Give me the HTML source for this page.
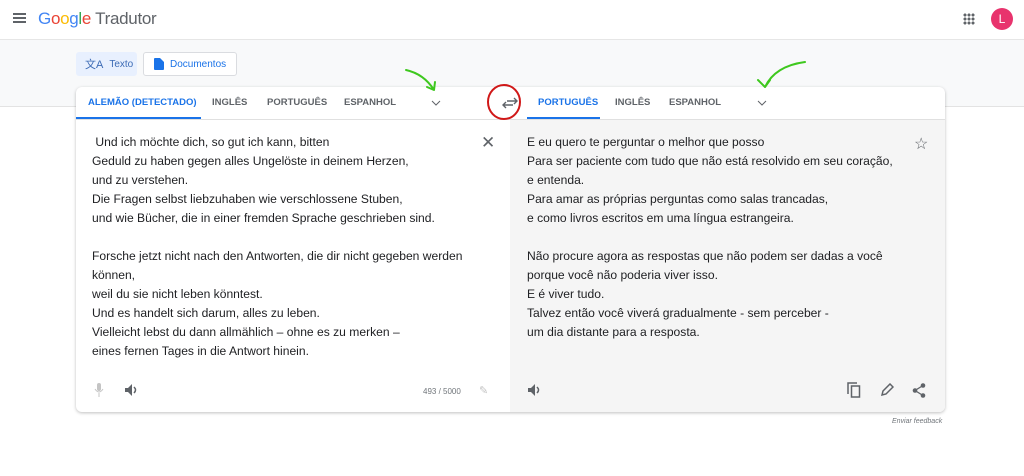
<!DOCTYPE html>
<html><head><meta charset="utf-8"><style>
*{margin:0;padding:0;box-sizing:border-box}
body{width:1024px;height:476px;overflow:hidden;background:#fff;font-family:"Liberation Sans",Arial,sans-serif;position:relative;color:#3c4043}
.hdr{position:absolute;left:0;top:0;width:1024px;height:40px;background:#fff;border-bottom:1px solid #e6e6e6}
.band{position:absolute;left:0;top:40px;width:1024px;height:67px;background:#f8f9fa;border-bottom:1px solid #e3e3e3}
.abs{position:absolute}
.btn{position:absolute;top:52px;height:24px;border:1px solid #dadce0;border-radius:3px;font-size:10px;color:#1a73e8;display:flex;align-items:center;padding-left:8px;gap:6px;background:#fff}
.card{position:absolute;left:76px;top:87px;width:869px;height:325px;background:#fff;border-radius:6px;box-shadow:0 1px 3px rgba(0,0,0,.25);overflow:hidden}
.tab{position:absolute;top:10px;font-size:9.5px;font-weight:bold;color:#5f6368}
.txt{position:absolute;font-size:12.1px;line-height:19px;color:#202124;white-space:pre}
</style></head><body>
<div class="hdr"></div>
<div class="abs" style="left:13px;top:13px;width:13px;height:2px;background:#5f6368;box-shadow:0 4px 0 #5f6368,0 8px 0 #5f6368"></div>
<div class="abs" style="left:38px;top:9px;font-size:17px;letter-spacing:-0.3px"><span style="color:#4285f4">G</span><span style="color:#ea4335">o</span><span style="color:#fbbc05">o</span><span style="color:#4285f4">g</span><span style="color:#34a853">l</span><span style="color:#ea4335">e</span> <span style="color:#5f6368">Tradutor</span></div>
<div class="abs" style="left:963px;top:13px;width:12px;height:12px;background:radial-gradient(circle,#5f6368 1.4px,transparent 1.6px) 0 0/4px 4px"></div>
<div class="abs" style="left:991px;top:8px;width:22px;height:22px;border-radius:50%;background:#e8336d;color:#fff;font-size:12px;text-align:center;line-height:22px">L</div>
<div class="band"></div>
<div class="btn" style="left:76px;width:61px;background:#e8f0fe;border-color:#e8f0fe;color:#3c6bb5"><span style="font-size:11px">文A</span>Texto</div>
<div class="btn" style="left:143px;width:94px;padding-left:10px"><svg width="10" height="12"><path d="M0 1Q0 0 1 0H6L10 4V11Q10 12 9 12H1Q0 12 0 11Z" fill="#1a73e8"/></svg>Documentos</div>
<div class="card">
<div class="abs" style="left:0;top:32px;width:869px;height:1px;background:#e0e0e0"></div>
<div class="abs" style="left:434px;top:33px;width:435px;height:292px;background:#f5f5f5"></div>
<div class="tab" style="left:12px;color:#1a73e8">ALEMÃO (DETECTADO)</div>
<div class="abs" style="left:0;top:30px;width:125px;height:2px;background:#1a73e8"></div>
<div class="tab" style="left:136px">INGLÊS</div>
<div class="tab" style="left:191px">PORTUGUÊS</div>
<div class="tab" style="left:268px">ESPANHOL</div>
<svg class="abs" style="left:355px;top:12px" width="10" height="8"><path d="M1 2L5 6L9 2" stroke="#5f6368" fill="none"/></svg>
<div class="tab" style="left:462px;color:#1a73e8">PORTUGUÊS</div>
<div class="abs" style="left:451px;top:30px;width:73px;height:2px;background:#1a73e8"></div>
<div class="tab" style="left:539px">INGLÊS</div>
<div class="tab" style="left:593px">ESPANHOL</div>
<svg class="abs" style="left:681px;top:12px" width="10" height="8"><path d="M1 2L5 6L9 2" stroke="#5f6368" fill="none"/></svg>
<div class="txt" style="left:16px;top:46px"> Und ich möchte dich, so gut ich kann, bitten
Geduld zu haben gegen alles Ungelöste in deinem Herzen,
und zu verstehen.
Die Fragen selbst liebzuhaben wie verschlossene Stuben,
und wie Bücher, die in einer fremden Sprache geschrieben sind.

Forsche jetzt nicht nach den Antworten, die dir nicht gegeben werden
können,
weil du sie nicht leben könntest.
Und es handelt sich darum, alles zu leben.
Vielleicht lebst du dann allmählich – ohne es zu merken –
eines fernen Tages in die Antwort hinein.</div>
<div class="abs" style="left:405px;top:46px;font-size:17px;color:#5f6368">✕</div>
<div class="txt" style="left:451px;top:46px">E eu quero te perguntar o melhor que posso
Para ser paciente com tudo que não está resolvido em seu coração,
e entenda.
Para amar as próprias perguntas como salas trancadas,
e como livros escritos em uma língua estrangeira.

Não procure agora as respostas que não podem ser dadas a você
porque você não poderia viver isso.
E é viver tudo.
Talvez então você viverá gradualmente - sem perceber -
um dia distante para a resposta.</div>
<div class="abs" style="left:838px;top:47px;font-size:16px;color:#5f6368">☆</div>
<svg class="abs" style="left:18px;top:296px" width="10" height="14"><rect x="3" y="0" width="4" height="8" rx="2" fill="#c4c4c4"/><path d="M1 6Q5 12 9 6M5 10V14" stroke="#c4c4c4" fill="none"/></svg>
<svg class="abs" style="left:49px;top:297px" width="14" height="12"><path d="M0 4H3L7 0V12L3 8H0Z" fill="#5f6368"/><path d="M9 3Q12 6 9 9" stroke="#5f6368" fill="none" stroke-width="1.5"/></svg>
<div class="abs" style="left:347px;top:300px;font-size:8px;color:#70757a">493 / 5000</div>
<div class="abs" style="left:403px;top:297px;font-size:11px;color:#c4c4c4">✎</div>
<svg class="abs" style="left:452px;top:297px" width="14" height="12"><path d="M0 4H3L7 0V12L3 8H0Z" fill="#5f6368"/><path d="M9 3Q12 6 9 9" stroke="#5f6368" fill="none" stroke-width="1.5"/></svg>
<svg class="abs" style="left:771px;top:295px" width="14" height="16"><path d="M1 12V1H10" stroke="#5f6368" fill="none" stroke-width="1.5"/><rect x="4.5" y="4" width="8" height="11" stroke="#5f6368" fill="none" stroke-width="1.5"/></svg>
<svg class="abs" style="left:804px;top:296px" width="14" height="14"><path d="M2 12L3 8L10 1L13 4L6 11Z" stroke="#5f6368" fill="none" stroke-width="1.5"/></svg>
<svg class="abs" style="left:836px;top:296px" width="14" height="15"><circle cx="11" cy="2.5" r="2.3" fill="#5f6368"/><circle cx="3" cy="7.5" r="2.3" fill="#5f6368"/><circle cx="11" cy="12.5" r="2.3" fill="#5f6368"/><path d="M11 2.5L3 7.5L11 12.5" stroke="#5f6368" fill="none" stroke-width="1.3"/></svg>
</div>
<svg class="abs" style="left:502px;top:97px" width="16" height="12"><path d="M1 8H11M4 5L1 8L4 11M15 4H5M12 1L15 4L12 7" stroke="#5f6368" fill="none" stroke-width="1.4"/></svg>
<svg class="abs" style="left:400px;top:60px" width="420" height="60" fill="none" stroke-width="2" stroke-linecap="round">
<path d="M6 10Q24 14 34 30M34 30L27 27M34 30L35 22" stroke="#3ec81e"/>
<ellipse cx="104" cy="42" rx="16" ry="17" stroke="#d01818"/>
<path d="M405 2Q375 6 365 27M365 27L358 20M365 27L370 20" stroke="#3ec81e"/>
</svg>
<div class="abs" style="left:892px;top:418px;font-size:7px;font-style:italic;color:#70757a">Enviar feedback</div>
</body></html>
